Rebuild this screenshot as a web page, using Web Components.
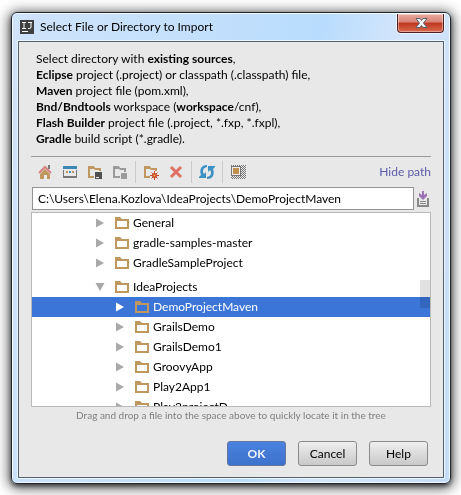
<!DOCTYPE html>
<html lang="en">
<head>
<meta charset="utf-8">
<title>Select File or Directory to Import</title>
<style>
  body { margin: 0; padding: 12px 10px 11px 11px; background: #fff; color: #000; font: 12px/16px Lato, "Open Sans", sans-serif; }
</style>
</head>
<body>
<import-dialog></import-dialog>

<script>
const define = (name, html, setup) => customElements.define(name, class extends HTMLElement {
  connectedCallback() {
    if (this.shadowRoot) return;
    const t = document.createElement('template');
    t.innerHTML = html;
    this.attachShadow({ mode: 'open' }).append(t.content.cloneNode(true));
    if (setup) setup(this, this.shadowRoot);
  }
});

const folder = '<path fill="#bf975f" fill-rule="evenodd" d="M1 2h5l2 2h7v10H1zM3 6v6h10V6z"/>';
const icons = {
  home: '<path fill="#777" d="M11 1h2v4h-2z"/><path fill="#bf975f" d="M8 5l5 5v5h-3v-4H7v4H3v-5z"/><path fill="none" stroke="#d98080" stroke-width="2" d="M2 9L8 3l6 6"/>',
  project: '<path fill="#3c88b5" d="M1 2h14v3H1z"/><path fill="#777" fill-rule="evenodd" d="M1 6h14v8H1zM2 6v6h12V6z"/><path fill="#bf975f" d="M4 7h2v2H4zM10 7h2v2h-2z"/><path fill="#4292bd" d="M7 7h2v2H7z"/>',
  module: '<path fill="#bf975f" fill-rule="evenodd" d="M1 2h6l1 2h6v3h-2V6H8L7 5H3v7h4v2H1z"/><path fill="#505050" d="M8 8h7v7H8z"/><path fill="#eee" d="M9 13h3v1H9z"/>',
  desktop: '<path fill="#9a9a9a" fill-rule="evenodd" d="M1 2h6l1 2h6v4h-2V6H8L7 5H3v7h5v2H1z"/><path fill="#9a9a9a" d="M9 9h6v6H9z"/>',
  create: '<path fill="#bf975f" d="M1 2h6l1 2h6v3h-2V6H8L7 5H3v7h4v2H1z"/><path stroke="#c9482c" stroke-width="1" d="M11.500 7v9M7 11.500h9M8.500 8.500l6 6M14.500 8.500l-6 6"/><circle cx="11.500" cy="11.500" r="2.500" fill="#c9482c"/><circle cx="11.500" cy="11.500" r="1" fill="#f0b44c"/>',
  remove: '<path fill="none" stroke="#df6f60" stroke-width="3" d="M3 3l10 10M13 3L3 13"/>',
  refresh: '<path fill="#3c91c6" d="M8 1C2 1 0 6 2 11L0 13v1h7V8L5 10C3 7 4 4 8 3zM8 15c6 0 8-5 6-10l2-2V2H9v6l2-2c2 3 1 6-3 7z"/>',
  hidden: '<defs><pattern id="dots" width="2" height="2" patternUnits="userSpaceOnUse"><path fill="#777" d="M0 0h1v1H0zM1 1h1v1H1z"/></pattern></defs><path fill="url(#dots)" d="M1 1h15v14H1z"/><path fill="#777" d="M1 2h10v10H1z"/><path fill="#eee" d="M2 3h8v8H2z"/><path fill="#c18f50" d="M3 4h6v6H3z"/>',
  recent: '<path fill="#888" d="M2 7h2v7h8V7h2v9H2zM5 10h6v1H5zM5 12h6v1H5z"/><path fill="#9b72b5" d="M7 0h2v4l3-2v3L8 9 4 5V2l3 2z"/>',
  folder,
  right: '<path fill="#a9a9a9" d="M4 3.500v9l8-4.500z"/>',
  selected: '<path fill="#fff" d="M4 3.500v9l8-4.500z"/>',
  down: '<path fill="#a9a9a9" d="M3.500 4h9L8 12z"/>',
  logo: '<path fill="#3d403f" d="M1 1h14v14H1z"/><path fill="none" stroke="#fff" stroke-width="1" d="M3 3.500h4M5 3.500v6M3 9.500h4M9 3.500h4M12 3.500V8q0 1.500-1.500 1.500H9"/><path fill="#fff" d="M3 12h6v1H3z"/>',
  close: '<path fill="#f5f5f5" stroke="#57606e" stroke-width="1" d="M3 3.500h4l1.500 2 1.500-2h4L10.500 8l3.500 4.500h-4l-1.500-2-1.500 2H3L6.500 8z"/>'
};

define('ui-icon', `<style>:host{display:block;width:16px;height:16px;flex:none}svg{display:block;width:100%;height:100%}</style><svg viewBox="0 0 16 16" aria-hidden="true"></svg>`,
  (el, root) => { root.querySelector('svg').innerHTML = icons[el.getAttribute('name')] || ''; });

define('tool-button', `<style>
  :host{display:block}
  button{display:block;border:0;padding:0;background:none}
</style><button type="button"><ui-icon></ui-icon></button>`,
  (el, root) => {
    root.querySelector('button').setAttribute('aria-label', el.getAttribute('label'));
    const icon = document.createElement('ui-icon');
    icon.setAttribute('name', el.getAttribute('icon'));
    root.querySelector('ui-icon').replaceWith(icon);
  });

define('dialog-button', `<style>
  :host{display:block}
  button{box-sizing:border-box;width:59px;height:25px;padding:0;border:1px solid #8b8b8b;border-radius:3px;background:linear-gradient(#eee,#c9c9c9);color:#000;font:inherit}
  :host([primary]) button{border-color:#66769b;background:linear-gradient(#4a82e0,#3d72cc);color:#f2f5fb;font-weight:700}
</style><button type="button"><slot></slot></button>`);

define('title-bar', `<style>
  :host{display:flex;align-items:flex-start;height:27px;padding:0 0 0 1px}
  ui-icon{margin-top:5px}
  h1{flex:1;margin:5px 0 0 5px;font:inherit}
  button{display:flex;justify-content:center;align-items:center;box-sizing:border-box;width:47px;height:19px;padding:0;border:1px solid #4d2226;border-top:0;border-radius:0 0 4px 4px;background:linear-gradient(#e9aaa0 0,#d98476 45%,#bd3620 50%,#d96a4d);box-shadow:inset 0 0 0 1px #ffffff66,0 0 0 1px #ffffffaa}
  button ui-icon{margin:0}
</style><ui-icon name="logo"></ui-icon><h1><slot></slot></h1><button type="button" aria-label="Close"><ui-icon name="close"></ui-icon></button>`);

define('icon-toolbar', `<style>
  :host{display:flex;align-items:center;height:30px;padding:0 0 0 6px;border-top:1px solid #9b9b9b}
  div{display:flex;gap:9px;align-items:center}
  i{width:1px;height:22px;background:#cacaca;margin:0 7px}
  a{margin-left:auto;color:#5a5caa;text-decoration:none;font-size:12px}
</style>
<div><tool-button icon="home" label="Home"></tool-button><tool-button icon="project" label="Project directory"></tool-button><tool-button icon="module" label="Module directory"></tool-button><tool-button icon="desktop" label="Desktop"></tool-button></div><i></i>
<div><tool-button icon="create" label="New folder"></tool-button><tool-button icon="remove" label="Delete"></tool-button></div><i></i>
<tool-button icon="refresh" label="Refresh"></tool-button><i></i>
<tool-button icon="hidden" label="Show hidden files"></tool-button>
<a href="#">Hide path</a>`);

define('path-field', `<style>
  :host{display:flex;align-items:center;gap:1px;padding-left:1px}
  input{flex:1;min-width:0;box-sizing:border-box;height:23px;padding:0 5px;border:1px solid #949494;background:#fff;color:#000;font:inherit}
</style><input type="text" aria-label="Path" value="C:\\Users\\Elena.Kozlova\\IdeaProjects\\DemoProjectMaven"><tool-button icon="recent" label="Recent paths"></tool-button>`);

define('tree-row', `<style>
  :host{display:flex;align-items:center;height:20px;padding-left:60px;white-space:nowrap}
  :host([level="2"]){padding-left:80px}
  :host([aria-expanded="true"]){margin-top:4px}
  :host([aria-selected="true"]){background:#3a75d7;color:#fff}
  .name{margin-left:3px}
  #folder{margin-left:6px}
</style><ui-icon id="arrow"></ui-icon><ui-icon id="folder" name="folder"></ui-icon><span class="name"><slot></slot></span>`,
  (el, root) => {
    const arrow = document.createElement('ui-icon');
    arrow.setAttribute('name', el.ariaSelected === 'true' ? 'selected' : el.ariaExpanded === 'true' ? 'down' : 'right');
    root.querySelector('#arrow').replaceWith(arrow);
  });

define('file-tree', `<style>
  :host{display:block;position:relative;box-sizing:border-box;height:195px;overflow:hidden;border:1px solid #b9b9b9;background:#fff}
  .thumb{position:absolute;right:0;top:67px;width:10px;height:28px;background:#e1e1e1;mix-blend-mode:multiply}
</style><div role="tree" aria-label="Directories"><slot></slot></div><div class="thumb"></div>`);

define('import-dialog', `<style>
  :host{display:block;box-sizing:border-box;padding:1px 6px 5px;border:1px solid #1c2733;border-radius:6px;
    background:linear-gradient(100deg,#cfe3fa 0,#c4e0fc 35%,#b8dcfd 60%,#d3e5fb 75%,#c5ddf8 100%);
    box-shadow:inset 0 0 0 1px #f4faff,0 2px 4px #0008,0 2px 13px 2px #000a}
  main{box-sizing:border-box;padding:9px 12px 11px;border:1px solid #56616f;background:#e8e8e8;box-shadow:0 0 0 1px #eaf5ff}
  p{margin:0}
  .intro{padding:0 5px 9px}
  file-tree{margin-top:2px}
  .hint{text-align:center;color:#808080;font-size:10px}
  footer{display:flex;justify-content:flex-end;gap:12px;padding:18px 3px 0 0}
</style>
<title-bar>Select File or Directory to Import</title-bar>
<main>
<p class="intro">Select directory with <b>existing sources</b>,<br><b>Eclipse</b> project (.project) or classpath (.classpath) file,<br><b>Maven</b> project file (pom.xml),<br><b>Bnd/Bndtools</b> workspace (<b>workspace</b>/cnf),<br><b>Flash Builder</b> project file (.project, *.fxp, *.fxpl),<br><b>Gradle</b> build script (*.gradle).</p>
<icon-toolbar></icon-toolbar>
<path-field></path-field>
<file-tree>
<tree-row role="treeitem">General</tree-row>
<tree-row role="treeitem">gradle-samples-master</tree-row>
<tree-row role="treeitem">GradleSampleProject</tree-row>
<tree-row role="treeitem" aria-expanded="true">IdeaProjects</tree-row>
<tree-row role="treeitem" level="2" aria-selected="true">DemoProjectMaven</tree-row>
<tree-row role="treeitem" level="2">GrailsDemo</tree-row>
<tree-row role="treeitem" level="2">GrailsDemo1</tree-row>
<tree-row role="treeitem" level="2">GroovyApp</tree-row>
<tree-row role="treeitem" level="2">Play2App1</tree-row>
<tree-row role="treeitem" level="2">Play2projectD</tree-row>
</file-tree>
<p class="hint">Drag and drop a file into the space above to quickly locate it in the tree</p>
<footer><dialog-button primary>OK</dialog-button><dialog-button>Cancel</dialog-button><dialog-button>Help</dialog-button></footer>
</main>`);
</script>
</body>
</html>
